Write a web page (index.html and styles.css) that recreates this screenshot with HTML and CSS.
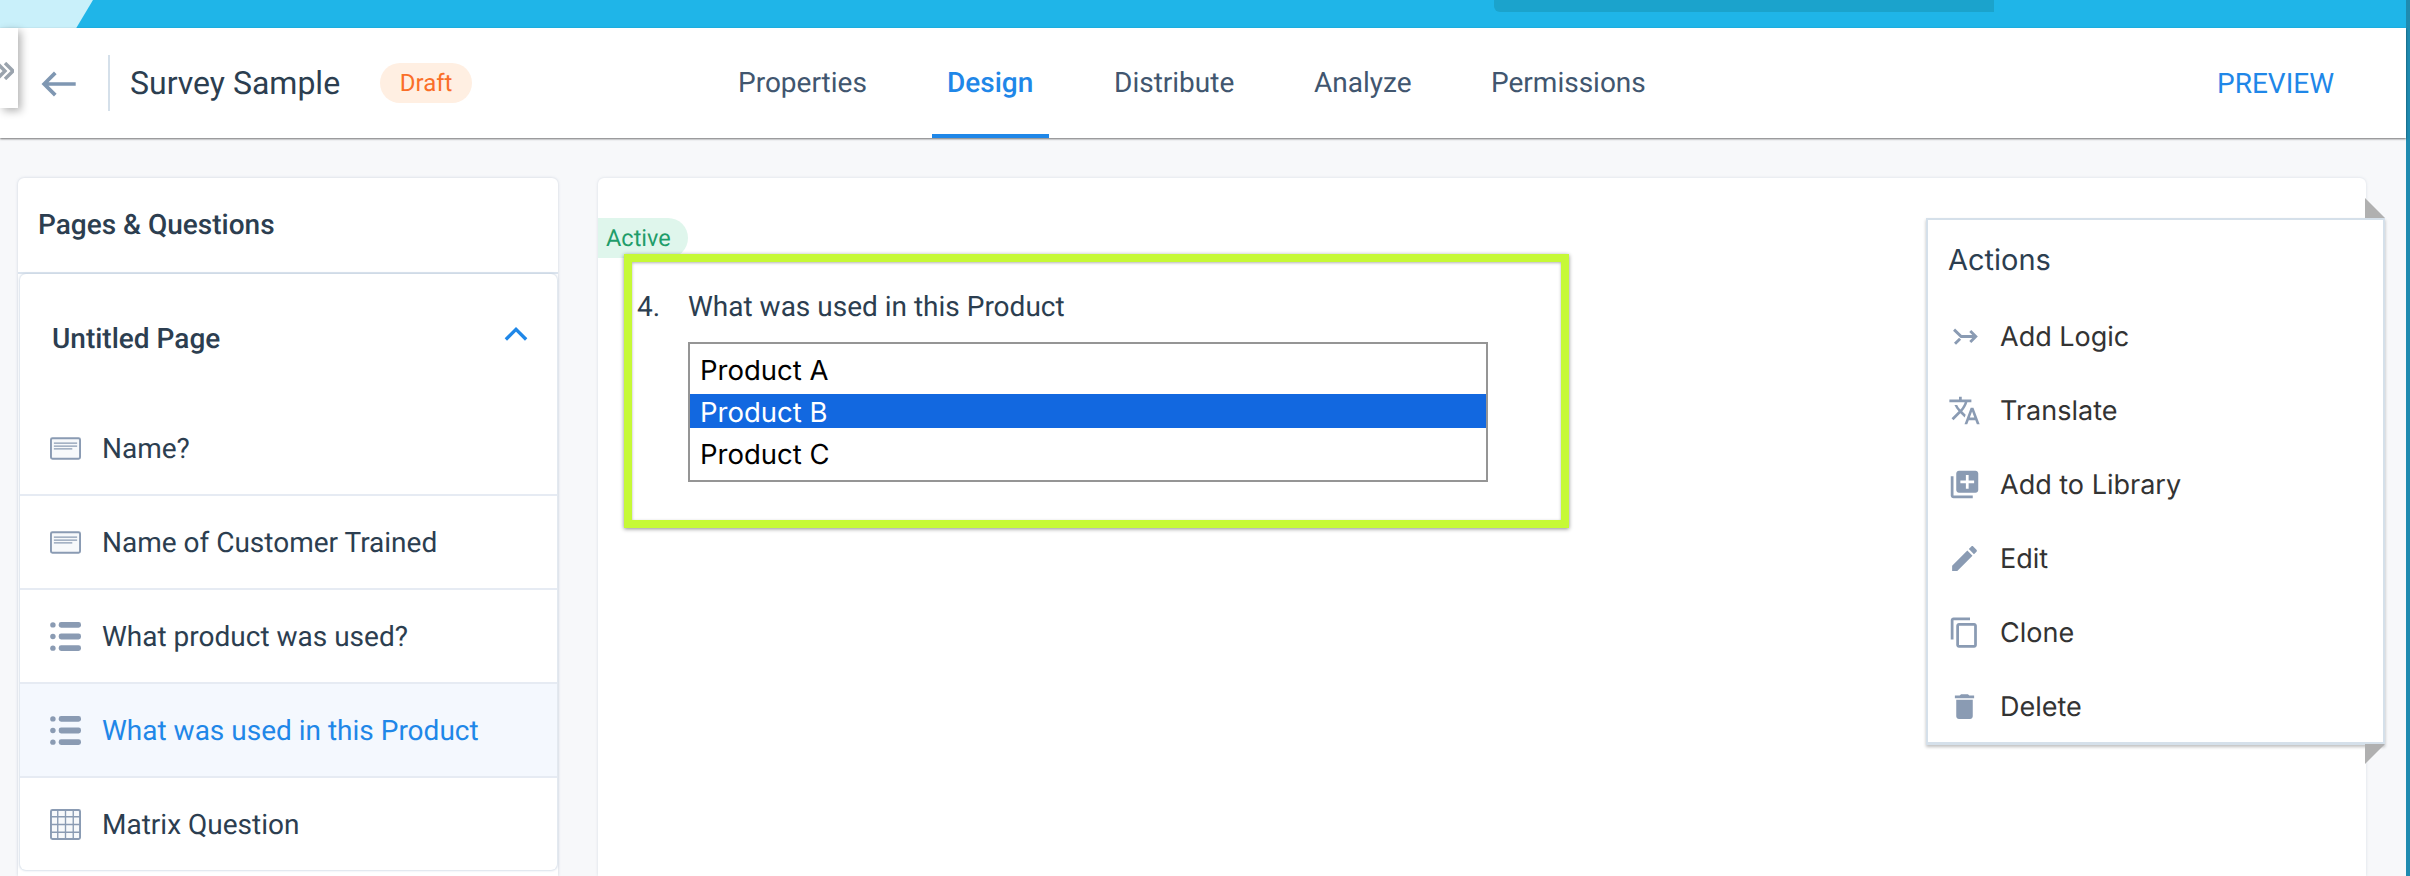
FILE: index.html
```html
<!DOCTYPE html>
<html lang="en">
<head>
<meta charset="utf-8">
<title>Survey Sample</title>
<link rel="stylesheet" href="styles.css">
</head>
<body>
<div class="app">
  <div class="column">
    <div class="topbar">
      <div class="topbar-logo"></div>
      <div class="topbar-search"></div>
    </div>
    <header class="header">
      <div class="side-tab">
        <svg class="side-tab-icon" viewBox="0 0 14 18"><path d="M-3 1l8 8-8 8M5 1l8 8-8 8"/></svg>
      </div>
      <svg class="back" viewBox="0 0 40 28"><path d="M38 14H4M16 2L4 14l12 12"/></svg>
      <div class="divider"></div>
      <div class="title">Survey Sample</div>
      <div class="draft">Draft</div>
      <nav class="tabs">
        <a class="tab t-properties">Properties</a>
        <a class="tab t-design active">Design</a>
        <a class="tab t-distribute">Distribute</a>
        <a class="tab t-analyze">Analyze</a>
        <a class="tab t-permissions">Permissions</a>
      </nav>
      <a class="preview">PREVIEW</a>
    </header>
    <main class="content">
      <aside class="panel">
        <div class="panel-head">Pages &amp; Questions</div>
        <div class="page-card">
          <div class="page-head">
            <span>Untitled Page</span>
            <svg class="chevron" viewBox="0 0 26 16"><path d="M2 14L13 3l11 11"/></svg>
          </div>
          <div class="row">
            <svg class="row-icon" viewBox="0 0 32 24"><rect x="1" y="1.5" width="30" height="21" rx="1.5" class="box"/><path d="M4 6.5h24M4 9.5h24M4 12.5h19" class="thin"/></svg>
            <span>Name?</span>
          </div>
          <div class="row">
            <svg class="row-icon" viewBox="0 0 32 24"><rect x="1" y="1.5" width="30" height="21" rx="1.5" class="box"/><path d="M4 6.5h24M4 9.5h24M4 12.5h19" class="thin"/></svg>
            <span>Name of Customer Trained</span>
          </div>
          <div class="row">
            <svg class="row-icon" viewBox="0 0 32 32"><g class="solid"><circle cx="3" cy="4" r="2.8"/><circle cx="3" cy="16" r="2.8"/><circle cx="3" cy="28" r="2.8"/><rect x="9" y="1" width="23" height="6" rx="2.5"/><rect x="9" y="13" width="23" height="6" rx="2.5"/><rect x="9" y="25" width="23" height="6" rx="2.5"/></g></svg>
            <span>What product was used?</span>
          </div>
          <div class="row selected">
            <svg class="row-icon" viewBox="0 0 32 32"><g class="solid"><circle cx="3" cy="4" r="2.8"/><circle cx="3" cy="16" r="2.8"/><circle cx="3" cy="28" r="2.8"/><rect x="9" y="1" width="23" height="6" rx="2.5"/><rect x="9" y="13" width="23" height="6" rx="2.5"/><rect x="9" y="25" width="23" height="6" rx="2.5"/></g></svg>
            <span>What was used in this Product</span>
          </div>
          <div class="row last">
            <svg class="row-icon" viewBox="0 0 32 32"><rect x="1" y="1" width="30" height="30" rx="1.5" class="box"/><path d="M8 1v30M16 1v30M24 1v30M1 8h30M1 16h30M1 24h30" class="grid"/></svg>
            <span>Matrix Question</span>
          </div>
        </div>
      </aside>
      <section class="canvas">
        <div class="active-badge">Active</div>
        <div class="question">
          <div class="q-line"><span class="q-num">4.</span><span>What was used in this Product</span></div>
          <div class="listbox">
            <div class="opt opt-a">Product A</div>
            <div class="opt opt-b">Product B</div>
            <div class="opt opt-c">Product C</div>
          </div>
        </div>
        <div class="actions">
          <div class="fold fold-top"></div>
          <div class="actions-title">Actions</div>
          <div class="action">
            <svg class="a-icon" viewBox="0 0 24 24"><path class="logic" d="M4.4 7l5.2 5h10.2M16.2 8l4 4-4 4M5.1 17.3l3.7-3.7"/></svg>
            <span>Add Logic</span>
          </div>
          <div class="action">
            <svg class="a-icon" viewBox="0 0 24 24"><path d="M12.87 15.07l-2.54-2.51.03-.03c1.74-1.94 2.98-4.17 3.71-6.53H17V4h-7V2H8v2H1v1.99h11.17C11.5 7.92 10.44 9.75 9 11.35 8.07 10.32 7.3 9.19 6.69 8h-2c.73 1.63 1.73 3.17 2.98 4.56l-5.09 5.02L4 19l5-5 3.11 3.11.76-2.04zM18.5 10h-2L12 22h2l1.12-3h4.75L21 22h2l-4.5-12zm-2.62 7l1.62-4.33L19.12 17h-3.24z"/></svg>
            <span>Translate</span>
          </div>
          <div class="action">
            <svg class="a-icon" viewBox="0 0 24 24"><path d="M4 6H2v14c0 1.1.9 2 2 2h14v-2H4V6zm16-4H8c-1.1 0-2 .9-2 2v12c0 1.1.9 2 2 2h12c1.1 0 2-.9 2-2V4c0-1.1-.9-2-2-2zm-1 9h-4v4h-2v-4H9V9h4V5h2v4h4v2z"/></svg>
            <span>Add to Library</span>
          </div>
          <div class="action">
            <svg class="a-icon" viewBox="0 0 24 24"><path d="M3 17.25V21h3.75L17.81 9.94l-3.75-3.75L3 17.25zM20.71 7.04c.39-.39.39-1.02 0-1.41l-2.34-2.34c-.39-.39-1.02-.39-1.41 0l-1.83 1.83 3.75 3.75 1.83-1.83z"/></svg>
            <span>Edit</span>
          </div>
          <div class="action">
            <svg class="a-icon" viewBox="0 0 24 24"><path d="M16 1H4c-1.1 0-2 .9-2 2v14h2V3h12V1zm3 4H8c-1.1 0-2 .9-2 2v14c0 1.1.9 2 2 2h11c1.1 0 2-.9 2-2V7c0-1.1-.9-2-2-2zm0 16H8V7h11v14z"/></svg>
            <span>Clone</span>
          </div>
          <div class="action">
            <svg class="a-icon" viewBox="0 0 24 24"><path d="M6 19c0 1.1.9 2 2 2h8c1.1 0 2-.9 2-2V7H6v12zM19 4h-3.5l-1-1h-5l-1 1H5v2h14V4z"/></svg>
            <span>Delete</span>
          </div>
          <div class="fold fold-bottom"></div>
        </div>
      </section>
    </main>
  </div>
  <div class="edge"></div>
</div>
</body>
</html>
```

FILE: styles.css
```css
* { box-sizing: border-box; }
html, body { margin: 0; padding: 0; height: 100%; overflow: hidden; }
body { font-family: Roboto, "Liberation Sans", sans-serif; color: #2c3e50; background: #f7f8fa; text-rendering: geometricPrecision; }

.app { display: flex; height: 876px; width: 2410px; overflow: hidden; }
.column { flex: 1; min-width: 0; display: flex; flex-direction: column; }
.edge { width: 4px; background: #1f8bb0; }

.topbar { height: 28px; background: #1fb5e8; position: relative; flex: none; display: flex; justify-content: flex-end; padding-right: 412px; }
.topbar-logo { position: absolute; left: 0; top: 0; width: 93px; height: 28px; background: #c9f0fa; clip-path: polygon(0 0, 100% 0, 82% 100%, 0 100%); }
.topbar-search { width: 500px; height: 12px; background: #1ba3cc; border-bottom-left-radius: 6px; }

.header { height: 110px; flex: none; background: #fff; display: flex; align-items: center; position: relative; padding-left: 40px; box-shadow: 0 1px 2px rgba(0,0,0,.55); z-index: 2; }
.side-tab { position: absolute; left: 0; top: 0; width: 18px; height: 80px; background: #fff; box-shadow: 3px 3px 8px rgba(0,0,0,.3); display: flex; align-items: center; }
.side-tab-icon { width: 14px; height: 18px; margin-top: 6px; }
.side-tab-icon path { fill: none; stroke: #9aa3ad; stroke-width: 3.4; }
.back { width: 38px; height: 26px; flex: none; margin-top: 2px; }
.back path { fill: none; stroke: #7f97b2; stroke-width: 4; }
.divider { width: 2px; height: 56px; background: #d5e0ea; margin-left: 30px; flex: none; }
.title { font-size: 32px; margin-left: 20px; color: #2c3e50; white-space: nowrap; }
.draft { height: 40px; width: 92px; margin-left: 40px; border-radius: 20px; background: #ffefe2; color: #fa6e28; font-size: 24px; display: flex; align-items: center; justify-content: center; }
.tabs { position: absolute; left: 0; top: 0; bottom: 0; }
.tab { position: absolute; top: 0; height: 110px; line-height: 110px; font-size: 28px; color: #41566f; white-space: nowrap; }
.t-properties { left: 738px; }
.t-design { left: 947px; color: #1f87e8; font-weight: 500; }
.t-design::after { content: ""; position: absolute; left: -15px; right: -16px; bottom: 0; height: 4px; background: #1f87e8; }
.t-distribute { left: 1114px; }
.t-analyze { left: 1314px; }
.t-permissions { left: 1491px; }
.preview { position: absolute; left: 2217px; top: 0; line-height: 112px; font-size: 28px; color: #1f87e8; }

.content { flex: 1; min-height: 0; display: flex; gap: 40px; padding: 40px 40px 0 18px; }
.panel { width: 540px; flex: none; background: #fff; border-radius: 6px 6px 0 0; box-shadow: 0 0 3px rgba(120,140,165,.35); display: flex; flex-direction: column; }
.panel-head { height: 96px; padding: 0 20px 2px; display: flex; align-items: center; font-size: 28px; font-weight: 500; border-bottom: 2px solid #dbe4ee; flex: none; }
.page-card { margin: 0 1px 0 2px; border-radius: 6px; background: #fff; box-shadow: 0 0 2px 1px rgba(190,203,220,.6); }
.page-head { height: 128px; padding: 49px 29px 0 32px; display: flex; align-items: flex-start; justify-content: space-between; font-size: 28px; font-weight: 500; line-height: 32px; }
.chevron { width: 24px; height: 16px; margin-top: 3px; }
.chevron path { fill: none; stroke: #1f87e8; stroke-width: 3.6; }
.row { height: 94px; display: flex; align-items: center; gap: 21px; padding: 2px 0 0 30px; font-size: 28px; line-height: 34px; border-bottom: 2px solid #e6ebf3; white-space: nowrap; }
.row.last { border-bottom: 0; height: 92px; border-radius: 0 0 6px 6px; }
.row.selected { background: #f4f8fe; color: #1f87e8; }
.row-icon { width: 31px; height: 31px; flex: none; margin-top: -1px; }
.box { fill: #f7f9fb; stroke: #8a9bb3; stroke-width: 2; }
.thin { fill: none; stroke: #8a9bb3; stroke-width: 1.3; }
.grid { fill: none; stroke: #8a9bb3; stroke-width: 1.4; }
.solid { fill: #8a9bb3; }

.canvas { flex: 1; background: #fff; border-radius: 6px 6px 0 0; position: relative; box-shadow: 0 0 3px rgba(120,140,165,.25); padding: 76px 0 0 26px; min-width: 0; }
.active-badge { position: absolute; left: 0; top: 40px; width: 90px; height: 40px; background: #dff6ec; color: #1f9d6a; border-radius: 0 20px 20px 0; font-size: 23.5px; padding-left: 8px; line-height: 41px; }
.question { position: relative; width: 945px; height: 274px; background: #fff; border: 8px solid #c6f936; box-shadow: 0 1px 4px rgba(0,0,0,.45), inset 0 1px 3px rgba(0,0,0,.3); padding: 0 0 0 5px; }
.q-line { display: flex; font-size: 28px; height: 60px; padding-top: 28px; line-height: 34px; color: #2c3e50; }
.q-num { width: 51px; flex: none; }
.listbox { margin: 20px 0 0 51px; width: 800px; height: 140px; border: 2px solid #959595; background: #fff; color: #000; font-family: Inter, Roboto, sans-serif; font-size: 27.5px; display: flex; flex-direction: column; }
.opt { padding-left: 10px; display: flex; align-items: center; }
.opt-a { height: 50px; padding-top: 2px; }
.opt-b { height: 34px; background: #1268e0; color: #fff; padding-top: 2px; }
.opt-c { flex: 1; }

.actions { position: absolute; left: 1328px; top: 40px; width: 459px; height: 527px; background: #fff; border: 2px solid #d5e0ea; border-bottom-width: 3px; box-shadow: 0 2px 3px rgba(0,0,0,.25); padding: 0 0 0 20px; }
.actions-title { font-family: Inter, Roboto, sans-serif; font-size: 29px; height: 79px; line-height: 80px; color: #2c3e50; }
.action { height: 74px; display: flex; align-items: center; font-family: Inter, Roboto, sans-serif; font-size: 27px; color: #333; gap: 19px; }
.a-icon { width: 33px; height: 33px; flex: none; fill: #8a9bb3; }
.logic { fill: none; stroke: #8a9bb3; stroke-width: 2.1; }
.fold { position: absolute; background: #b0b0b0; }
.fold-top { right: -2px; top: -22px; width: 20px; height: 20px; clip-path: polygon(0 0, 100% 100%, 0 100%); }
.fold-bottom { right: -2px; bottom: -22px; width: 20px; height: 20px; clip-path: polygon(0 0, 100% 0, 0 100%); }
```
